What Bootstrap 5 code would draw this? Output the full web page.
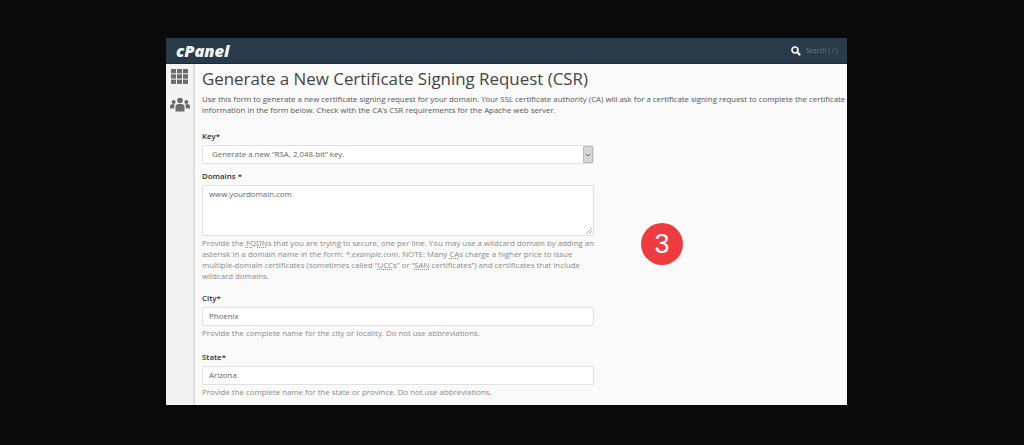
<!DOCTYPE html>
<html lang="en">
<head>
	<meta charset="UTF-8" />
	<meta name="viewport" content="width=device-width, initial-scale=1.0" />
	<title>Generate a New Certificate Signing Request (CSR)</title>
	<link href="https://cdn.jsdelivr.net/npm/bootstrap@5.3.3/dist/css/bootstrap.min.css" rel="stylesheet" />
	<style>
		html, body {
			height: 100%;
		}

		body {
			background-color: #0a0a0a;
			font-family: "Open Sans", "Liberation Sans", sans-serif;
			overflow: hidden;
			padding: 38px 177px 40px 166px;
		}

		.cp-window {
			background-color: #fafafa;
			height: 367px;
			overflow: hidden;
			position: relative;
		}

		.cp-topbar {
			background-color: #293a4a;
			border-bottom: 1px solid #1d2b38;
			height: 26px;
			padding: 0 9px 0 10px;
		}

		.cp-logo {
			color: #f2f5f7;
			font-size: 16.5px;
			font-style: italic;
			font-weight: 800;
			letter-spacing: -0.1px;
			line-height: 22px;
		}

		.cp-search {
			color: #6f7f8e;
			font-size: 6.6px;
			gap: 5px;
		}

		.cp-side {
			background-color: #f3f3f3;
			border-right: 2px solid #dedede;
			flex: 0 0 29px;
			gap: 13px;
			padding-top: 5px;
		}

		.cp-main {
			color: #555;
			font-size: 7.87px;
			min-width: 0;
			overflow: hidden;
			padding: 3px 0 0 7px;
		}

		.cp-title {
			color: #444;
			font-size: 16.9px;
			font-weight: 400;
			line-height: 24px;
			margin: 0 0 3px;
			white-space: nowrap;
		}

		.cp-intro {
			line-height: 11px;
			margin: 0 0 15px;
			white-space: nowrap;
		}

		.cp-form {
			width: 392px;
		}

		.cp-label {
			color: #333;
			display: block;
			font-size: 7.87px;
			font-weight: 600;
			line-height: 11px;
			margin-bottom: 3px;
		}

		.cp-field {
			background-color: #fff;
			border: 1px solid #e2e2e2;
			border-radius: 1px;
			color: #666;
			font-size: 7.87px;
			height: 19px;
			line-height: 17px;
			padding: 0 6px;
		}

		.cp-select {
			padding: 0 0 0 9px;
		}

		.cp-caret {
			background-color: #d6d6d6;
			border: 1px solid #bbb;
			border-radius: 1px;
			flex: 0 0 10px;
			height: 17px;
		}

		.cp-area {
			height: 51px;
			line-height: 11px;
			margin-bottom: 2px;
			padding-top: 3px;
			position: relative;
		}

		.cp-grip {
			bottom: 1px;
			position: absolute;
			right: 1px;
		}

		.cp-help {
			color: #8a8a8a;
			line-height: 11px;
			margin: 2px 0 0;
		}

		.cp-help abbr {
			text-decoration: underline dotted;
		}

		.cp-group-key {
			margin-bottom: 7px;
		}

		.cp-group-domains {
			margin-bottom: 11px;
		}

		.cp-group-city {
			margin-bottom: 13px;
		}

		.cp-step {
			align-items: center;
			background-color: #ef3b3f;
			border-radius: 50%;
			color: #fff;
			display: flex;
			font-family: "Liberation Sans", sans-serif;
			font-size: 27px;
			height: 42px;
			justify-content: center;
			left: 475px;
			position: absolute;
			top: 185px;
			width: 42px;
		}
	</style>
</head>
<body>

	<div class="cp-window">

		<div class="cp-topbar d-flex align-items-center justify-content-between">
			<span class="cp-logo">cPanel</span>
			<div class="d-flex align-items-center cp-search">
				<svg width="10" height="10" viewBox="0 0 10 10" fill="none" stroke="#fff">
					<circle cx="4" cy="4" r="3" stroke-width="1.7" />
					<path d="M6.3 6.3 9.2 9.2" stroke-width="2.1" />
				</svg>
				<span>Search ( / )</span>
			</div>
		</div>

		<div class="d-flex h-100">

			<div class="cp-side d-flex flex-column align-items-center">
				<svg width="17" height="15" viewBox="0 0 17 15" fill="#6b6b6b">
					<rect x="0" y="0" width="5" height="4.300" />
					<rect x="6" y="0" width="5" height="4.300" />
					<rect x="12" y="0" width="5" height="4.300" />
					<rect x="0" y="5.300" width="5" height="4.300" />
					<rect x="6" y="5.300" width="5" height="4.300" />
					<rect x="12" y="5.300" width="5" height="4.300" />
					<rect x="0" y="10.600" width="5" height="4.300" />
					<rect x="6" y="10.600" width="5" height="4.300" />
					<rect x="12" y="10.600" width="5" height="4.300" />
				</svg>
				<svg width="20" height="15" viewBox="0 0 20 14" fill="#6b6b6b">
					<circle cx="10" cy="3" r="2.8" />
					<circle cx="3.6" cy="4.4" r="2" />
					<circle cx="16.4" cy="4.4" r="2" />
					<path d="M5.5 14V9.5C5.500 7.500 7 6.600 8.500 6.600h3c1.500 0 3 .9 3 2.900V14z" />
					<path d="M0 11V8.500C0 7.300 1 6.800 2 6.800h3C4.200 7.500 4.200 8.500 4.200 11z" />
					<path d="M20 11V8.500C20 7.300 19 6.800 18 6.800h-3c.8.700.8 1.700.8 4.200z" />
				</svg>
			</div>

			<div class="cp-main flex-grow-1">
				<h1 class="cp-title">Generate a New Certificate Signing Request (CSR)</h1>
				<p class="cp-intro">Use this form to generate a new certificate signing request for your domain. Your SSL certificate authority (CA) will ask for a certificate signing request to complete the certificate<br />information in the form below. Check with the CA’s CSR requirements for the Apache web server.</p>

				<div class="cp-form">
					<div class="cp-group-key">
						<label class="cp-label">Key*</label>
						<div class="cp-field cp-select d-flex align-items-center justify-content-between">
							<span>Generate a new “RSA, 2,048-bit” key.</span>
							<span class="cp-caret d-flex align-items-center justify-content-center">
								<svg width="6" height="4" viewBox="0 0 6 4" fill="none" stroke="#666"><path d="M.8.8 3 3 5.200.8" /></svg>
							</span>
						</div>
					</div>

					<div class="cp-group-domains">
						<label class="cp-label">Domains *</label>
						<div class="cp-field cp-area">
							www.yourdomain.com
							<svg class="cp-grip" width="6" height="6" viewBox="0 0 6 6" stroke="#aaa"><path d="M0 6 6 0M3 6 6 3" /></svg>
						</div>
						<p class="cp-help">Provide the <abbr>FQDN</abbr>s that you are trying to secure, one per line. You may use a wildcard domain by adding an asterisk in a domain name in the form: <em>*.example.com</em>. NOTE: Many <abbr>CA</abbr>s charge a higher price to issue multiple-domain certificates (sometimes called “<abbr>UCC</abbr>s” or “<abbr>SAN</abbr> certificates”) and certificates that include wildcard domains.</p>
					</div>

					<div class="cp-group-city">
						<label class="cp-label">City*</label>
						<div class="cp-field">Phoenix</div>
						<p class="cp-help">Provide the complete name for the city or locality. Do not use abbreviations.</p>
					</div>

					<div>
						<label class="cp-label">State*</label>
						<div class="cp-field">Arizona</div>
						<p class="cp-help">Provide the complete name for the state or province. Do not use abbreviations.</p>
					</div>
				</div>
			</div>

		</div>

		<div class="cp-step">3</div>
	</div>

</body>
</html>
